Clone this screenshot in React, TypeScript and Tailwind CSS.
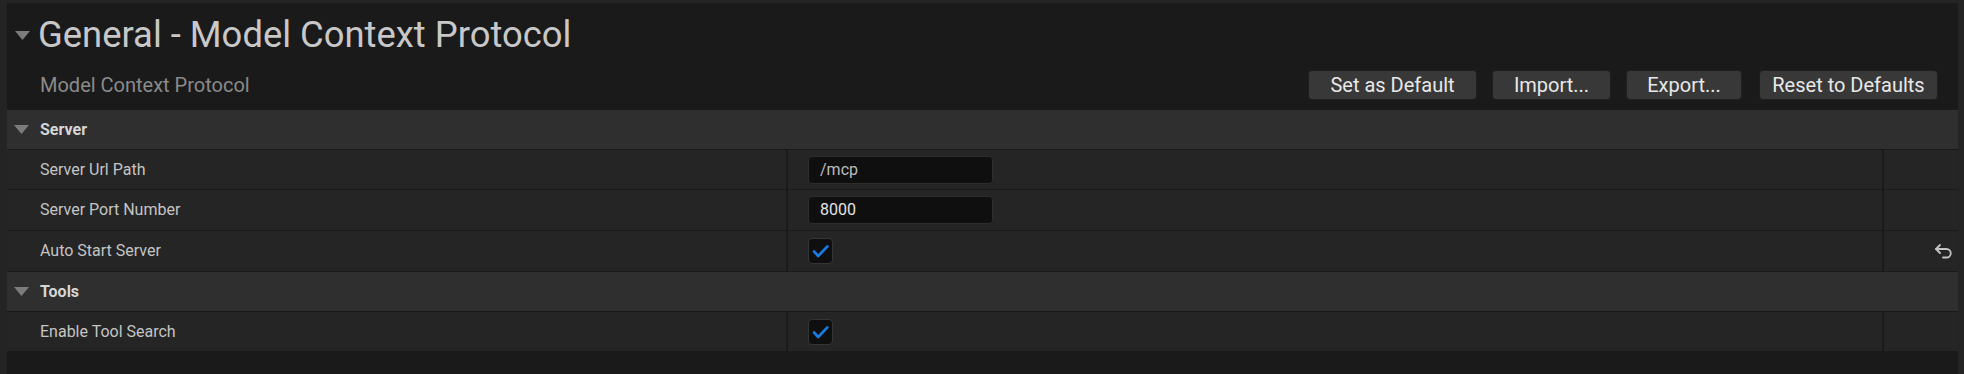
import React from "react";

const Tri = ({ className }: { className?: string }) => (
  <svg width="15" height="9" viewBox="0 0 15 9" className={className}>
    <path d="M0 0 H15 L7.5 9 Z" fill="#7c7c7c" />
  </svg>
);

const Check = () => (
  <svg width="25" height="26" viewBox="0 0 25 26">
    <path d="M5.5 13.5 L10 18.5 L20 8" fill="none" stroke="#1a7ae0" strokeWidth="3" strokeLinecap="round" strokeLinejoin="round" />
  </svg>
);

const UndoIcon = () => (
  <svg width="19" height="16" viewBox="0 0 19 16">
    <path d="M6 2 L2 6 L6 10" fill="none" stroke="#c4c4c4" strokeWidth="1.8" strokeLinecap="round" strokeLinejoin="round" />
    <path d="M2 6 H12.5 A4.25 4.25 0 0 1 12.5 14.5 H9" fill="none" stroke="#c4c4c4" strokeWidth="1.8" strokeLinecap="round" strokeLinejoin="round" />
  </svg>
);

const Header = ({ title }: { title: string }) => (
  <div className="h-[39px] bg-[#2f2f2f] flex items-center pl-[7px] mb-[1px]">
    <Tri />
    <span className="ml-[11px] text-[16px] font-bold text-[#d6d6d6]">{title}</span>
  </div>
);

const Row = ({ label, children, reset, h }: { label: string; children: React.ReactNode; reset?: boolean; h: string }) => (
  <div className={`grid grid-cols-[779px_1094px_74px] gap-x-[2px] ${h} mb-[1px]`}>
    <div className="bg-[#252525] flex items-center pl-[33px] text-[16px] text-[#c4c4c4]">{label}</div>
    <div className="bg-[#252525] flex items-center pl-[20px]">{children}</div>
    <div className="bg-[#252525] flex items-center justify-end pr-[5px]">{reset ? <UndoIcon /> : null}</div>
  </div>
);

const TextBox = ({ value, color }: { value: string; color: string }) => (
  <div className={`w-[185px] h-[28px] bg-[#0f0f0f] border border-[#2e2e2e] rounded-[4px] flex items-center pl-[11px] text-[16px] ${color}`}>
    {value}
  </div>
);

const CheckBox = () => (
  <div className="w-[25px] h-[26px] bg-[#0f0f0f] border border-[#353535] rounded-[4px] flex items-center justify-center">
    <Check />
  </div>
);

const Btn = ({ label, w, extra }: { label: string; w: string; extra?: string }) => (
  <div className={`${w} ${extra ?? ""} h-[30px] rounded-[4px] bg-[#383838] border border-[#1f1f1f] flex items-center justify-center text-[20px] text-[#e8e8e8]`}>
    {label}
  </div>
);

export default function App() {
  return (
    <div className="w-[1964px] h-[374px] bg-[#242424] pt-[3px] pl-[7px] pr-[6px] font-['Roboto',sans-serif] overflow-hidden">
      <div className="h-[371px] bg-[#1a1a1a] pt-[14px]">
        <div className="h-[36px] flex items-center pl-[8px]">
          <Tri />
          <span className="ml-[8px] text-[36.4px] leading-[36px] text-[#c8c8c8]">General - Model Context Protocol</span>
        </div>
        <div className="mt-[17px] h-[30px] flex items-center pl-[33px] pr-[20px]">
          <span className="text-[20px] leading-[20px] text-[#8a8a8a]">Model Context Protocol</span>
          <div className="ml-auto flex gap-[15px]">
            <Btn label="Set as Default" w="w-[169px]" />
            <Btn label="Import..." w="w-[119px]" />
            <Btn label="Export..." w="w-[116px]" />
            <Btn label="Reset to Defaults" w="w-[179px]" extra="ml-[2px]" />
          </div>
        </div>
        <div className="mt-[10px]">
          <Header title="Server" />
          <Row label="Server Url Path" h="h-[39px]">
            <TextBox value="/mcp" color="text-[#bcbcbc]" />
          </Row>
          <Row label="Server Port Number" h="h-[40px]">
            <TextBox value="8000" color="text-[#e4e4e4]" />
          </Row>
          <Row label="Auto Start Server" reset h="h-[40px]">
            <CheckBox />
          </Row>
          <Header title="Tools" />
          <Row label="Enable Tool Search" h="h-[39px]">
            <CheckBox />
          </Row>
        </div>
      </div>
    </div>
  );
}
